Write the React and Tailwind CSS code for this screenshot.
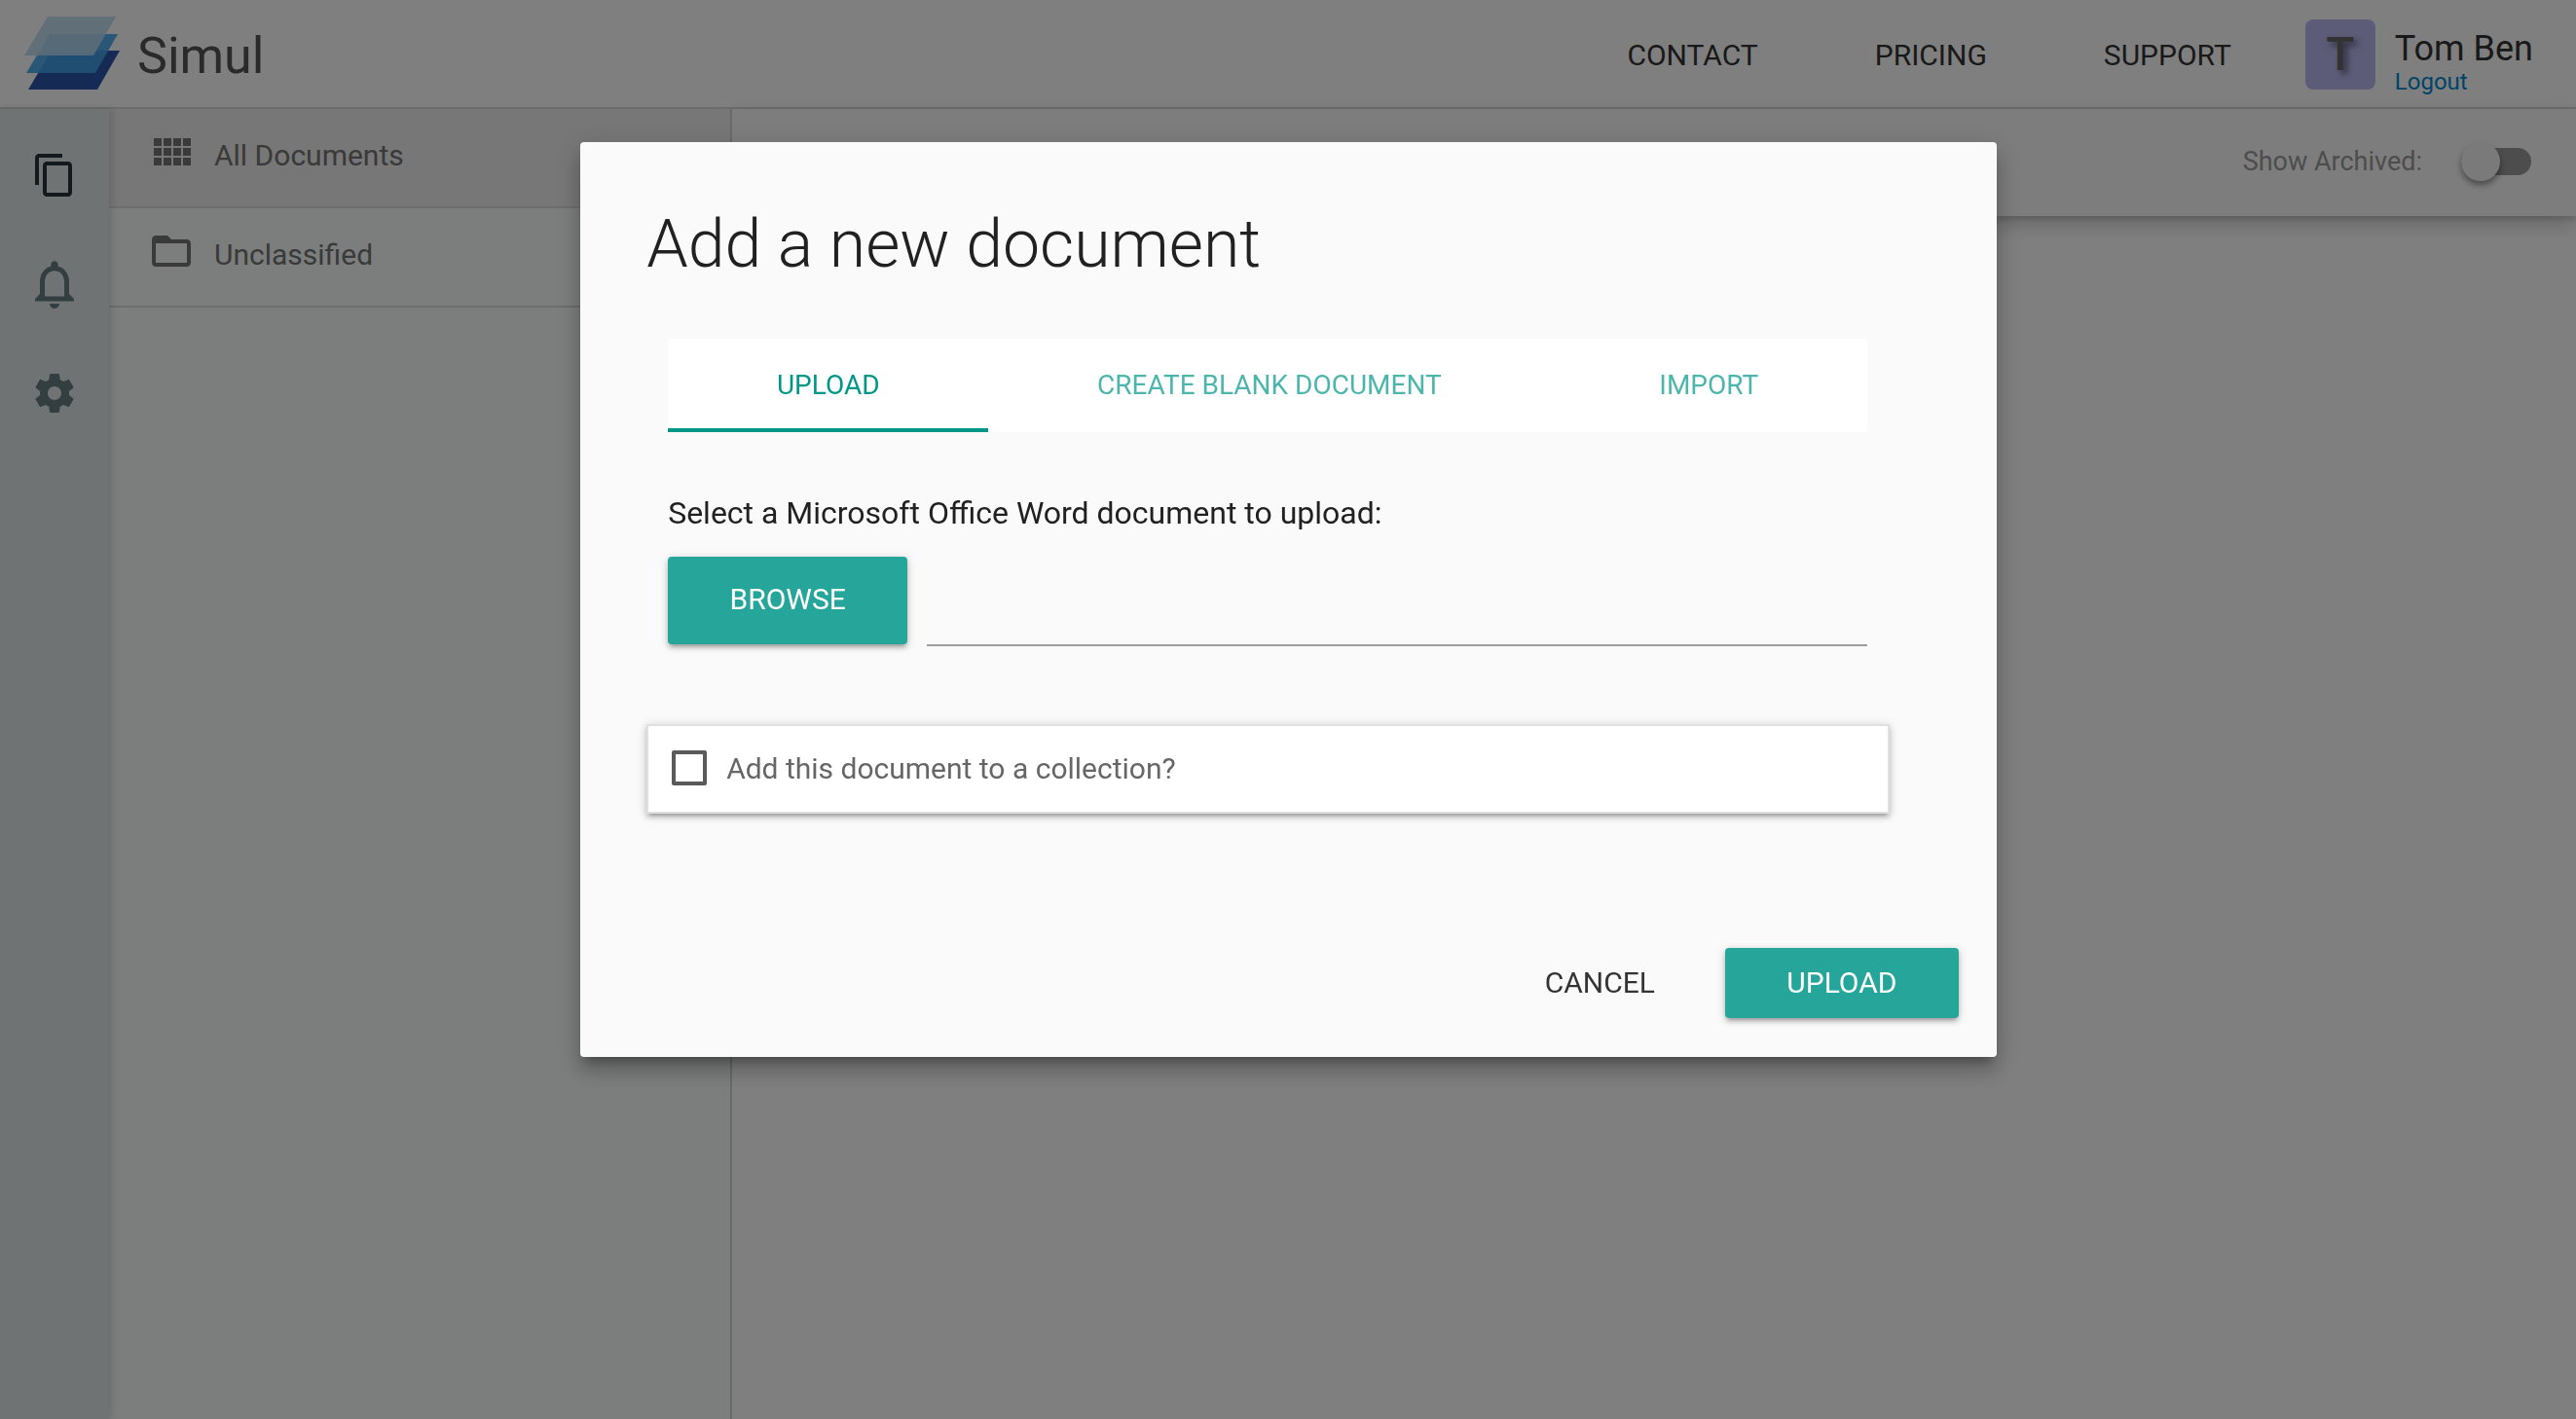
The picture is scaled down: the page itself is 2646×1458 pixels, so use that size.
import React from "react";

const icons = {
  copy: "M16 1H4c-1.1 0-2 .9-2 2v14h2V3h12V1zm3 4H8c-1.1 0-2 .9-2 2v14c0 1.1.9 2 2 2h11c1.1 0 2-.9 2-2V7c0-1.1-.9-2-2-2zm0 16H8V7h11v14z",
  bell: "M12 22c1.1 0 2-.9 2-2h-4c0 1.1.89 2 2 2zm6-6v-5c0-3.07-1.64-5.64-4.5-6.32V4c0-.83-.67-1.5-1.5-1.5s-1.5.67-1.5 1.5v.68C7.63 5.36 6 7.92 6 11v5l-2 2v1h16v-1l-2-2zm-2 1H8v-6c0-2.48 1.51-4.5 4-4.5s4 2.02 4 4.5v6z",
  gear: "M19.43 12.98c.04-.32.07-.64.07-.98s-.03-.66-.07-.98l2.11-1.65c.19-.15.24-.42.12-.64l-2-3.46c-.12-.22-.39-.3-.61-.22l-2.49 1c-.52-.4-1.08-.73-1.69-.98l-.38-2.65C14.46 2.18 14.25 2 14 2h-4c-.25 0-.46.18-.49.42l-.38 2.65c-.61.25-1.17.59-1.69.98l-2.49-1c-.23-.09-.49 0-.61.22l-2 3.46c-.13.22-.07.49.12.64l2.11 1.65c-.04.32-.07.65-.07.98s.03.66.07.98l-2.11 1.65c-.19.15-.24.42-.12.64l2 3.46c.12.22.39.3.61.22l2.49-1c.52.4 1.08.73 1.69.98l.38 2.65c.03.24.24.42.49.42h4c.25 0 .46-.18.49-.42l.38-2.65c.61-.25 1.17-.59 1.69-.98l2.49 1c.23.09.49 0 .61-.22l2-3.46c.12-.22.07-.49-.12-.64l-2.11-1.65zM12 15.5c-1.93 0-3.5-1.57-3.5-3.5s1.57-3.5 3.5-3.5 3.5 1.57 3.5 3.5-1.57 3.5-3.5 3.5z",
  grid: "M3 5h4v4H3zM8 5h4v4H8zM13 5h4v4h-4zM18 5h4v4h-4zM3 10h4v4H3zM8 10h4v4H8zM13 10h4v4h-4zM18 10h4v4h-4zM3 15h4v4H3zM8 15h4v4H8zM13 15h4v4h-4zM18 15h4v4h-4z",
  folder: "M20 6h-8l-2-2H4c-1.1 0-1.99.9-1.99 2L2 18c0 1.1.9 2 2 2h16c1.1 0 2-.9 2-2V8c0-1.1-.9-2-2-2zm0 12H4V8h16v10z",
};

function Icon({ name, className }) {
  return (
    <svg viewBox="0 0 24 24" fill="currentColor" aria-hidden="true" className={className}>
      <path d={icons[name]} />
    </svg>
  );
}

function Logo() {
  return (
    <svg viewBox="0 0 98 76" aria-hidden="true" className="h-[76px] w-[98px]">
      <path d="M28 35h70L75 75H4z" fill="#2a54a8" />
      <path d="M26 18h70L73 58H2z" fill="#41a5ec" fillOpacity="0.89" />
      <path d="M24 0h70L71 40H0z" fill="#bbdaf2" fillOpacity="0.89" />
    </svg>
  );
}

function Header() {
  return (
    <header className="flex h-28 items-start justify-between border-b-2 border-[#d8d8d8] bg-white pt-[17px] pr-11 pl-[25px]">
      <a href="#home" className="flex items-start gap-[18px] text-[52px] leading-[82px] text-[#555]">
        <Logo />
        Simul
      </a>
      <div className="flex items-start pt-[3px]">
        <nav className="mr-19 flex gap-30 text-[30px] leading-[74px] text-[#333]">
          <a href="#contact">CONTACT</a>
          <a href="#pricing">PRICING</a>
          <a href="#support">SUPPORT</a>
        </nav>
        <div className="flex items-start gap-5">
          <div className="flex size-18 items-center justify-center rounded-lg bg-[#bab8f0] text-5xl font-medium text-[#666] [text-shadow:4px_4px_6px_rgb(0_0_0/0.5)]">
            T
          </div>
          <div className="flex flex-col pt-3">
            <span className="text-4xl leading-9 text-[#333]">Tom Ben</span>
            <a href="#logout" className="text-2xl leading-8 text-[#0288d1]">Logout</a>
          </div>
        </div>
      </div>
    </header>
  );
}

function Rail() {
  return (
    <nav className="z-10 flex w-28 shrink-0 flex-col items-center gap-16 bg-[#dfe7e9] pt-11 text-[#667c83] shadow-[2px_0_8px_rgb(0_0_0/0.15)]">
      <button type="button" aria-label="Documents" className="text-[#263238]"><Icon name="copy" className="size-12" /></button>
      <button type="button" aria-label="Notifications" className="-my-1.5"><Icon name="bell" className="size-15" /></button>
      <button type="button" aria-label="Settings"><Icon name="gear" className="size-12" /></button>
    </nav>
  );
}

function FolderRow({ icon, label, className }) {
  return (
    <a href={"#" + icon} className={"flex h-[102px] items-start gap-5 border-b-2 border-[#dcdcdc] pt-5 pl-10 text-[#747474] " + className}>
      <Icon name={icon} className="size-12" />
      <span className="pt-2 text-[30px] leading-10">{label}</span>
    </a>
  );
}

function AddDialog() {
  return (
    <div className="fixed inset-0 z-20 flex items-start justify-center bg-black/50 pt-[146px] pl-px">
      <div role="dialog" aria-labelledby="dialog-title" className="w-[55%] rounded bg-[#fafafa] pt-[67px] text-[#212121] shadow-[0_16px_20px_2px_rgb(0_0_0/0.14),0_6px_28px_4px_rgb(0_0_0/0.12),0_10px_10px_-6px_rgb(0_0_0/0.3)]">
        <h1 id="dialog-title" className="pl-[68px] text-[68px] leading-[76px] font-light">Add a new document</h1>
        <div className="mr-[133px] ml-[90px] pt-[59px]">
          <div role="tablist" className="flex bg-white text-[28px] text-[#4db6ac]">
            <button type="button" role="tab" aria-selected="true" className="h-24 grow border-b-4 border-[#009688] pt-1 text-[#009688]">UPLOAD</button>
            <button type="button" role="tab" aria-selected="false" className="h-24 grow">CREATE BLANK DOCUMENT</button>
            <button type="button" role="tab" aria-selected="false" className="h-24 grow">IMPORT</button>
          </div>
          <label htmlFor="file-name" className="mt-[60px] block text-[32px] leading-[46px]">Select a Microsoft Office Word document to upload:</label>
          <div className="mt-[22px] flex gap-5">
            <button type="button" className="h-[90px] w-[246px] shrink-0 rounded bg-[#26a69a] pb-1 text-[30px] text-white shadow-[0_4px_4px_rgb(0_0_0/0.14),0_6px_2px_-4px_rgb(0_0_0/0.12),0_2px_10px_rgb(0_0_0/0.2)]">BROWSE</button>
            <input id="file-name" type="text" className="h-[92px] min-w-0 grow border-b-2 border-[#9e9e9e] bg-transparent text-[32px] outline-none" />
          </div>
        </div>
        <label className="mt-20 mr-[110px] ml-[68px] flex h-[92px] items-center gap-5 border-2 border-[#e0e0e0] bg-white pb-0.5 pl-6 text-[30px] text-[#666] shadow-[0_4px_4px_rgb(0_0_0/0.14),0_6px_2px_-4px_rgb(0_0_0/0.12),0_2px_10px_rgb(0_0_0/0.2)]">
          <input type="checkbox" className="size-9 appearance-none rounded-xs border-4 border-[#5a5a5a]" />
          Add this document to a collection?
        </label>
        <div className="mt-[138px] flex justify-end gap-3 pr-[39px] pb-10 text-[30px]">
          <button type="button" className="h-18 px-15 pb-0.5 text-[#343434]">CANCEL</button>
          <button type="button" className="h-18 w-60 rounded bg-[#26a69a] pb-0.5 text-white shadow-[0_4px_4px_rgb(0_0_0/0.14),0_6px_2px_-4px_rgb(0_0_0/0.12),0_2px_10px_rgb(0_0_0/0.2)]">UPLOAD</button>
        </div>
      </div>
    </div>
  );
}

export default function App() {
  return (
    <div className="flex min-h-screen flex-col bg-white font-[Roboto,sans-serif]">
      <Header />
      <div className="flex grow">
        <Rail />
        <aside className="relative w-[640px] shrink-0 border-r-2 border-[#d4d4d4] bg-[#f8fcfa]">
          <FolderRow icon="grid" label="All Documents" className="bg-[#eeeeee]" />
          <FolderRow icon="folder" label="Unclassified" className="" />
        </aside>
        <main className="grow">
          <div className="flex h-[110px] items-center justify-end bg-[#fafafa] pr-[46px] pb-0.5 shadow-[0_4px_4px_rgb(0_0_0/0.1),0_8px_20px_rgb(0_0_0/0.2)]">
            <label className="flex items-center gap-10 text-[27px] leading-10 text-[#9a9a9a]">
              Show Archived:
              <input
                type="checkbox"
                role="switch"
                className="relative h-7 w-18 appearance-none rounded-full bg-[#9a9a9a] before:absolute before:-top-1.5 before:left-0 before:size-10 before:rounded-full before:bg-[#f5f5f5] before:shadow-[0_4px_6px_rgb(0_0_0/0.4)]"
              />
            </label>
          </div>
        </main>
      </div>
      <AddDialog />
    </div>
  );
}
